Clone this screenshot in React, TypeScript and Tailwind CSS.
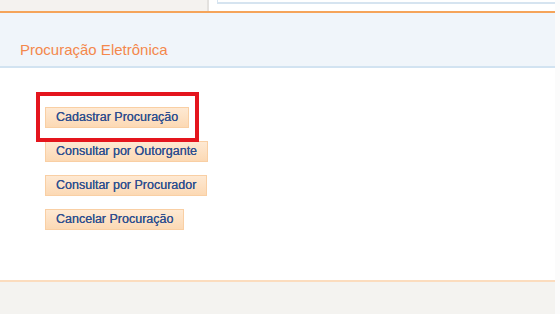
import React from 'react';

const actions = [
  'Cadastrar Procuração',
  'Consultar por Outorgante',
  'Consultar por Procurador',
  'Cancelar Procuração',
];

const ActionButton: React.FC<{ label: string }> = ({ label }) => (
  <button className="h-[21px] px-[10px] border border-[#f9cfa4] bg-gradient-to-b from-[#fee9d3] to-[#fcd9b4] text-[12.5px] leading-none text-[#2f4f8f] [text-shadow:0_0_0.4px_#2f4f8f]">
    {label}
  </button>
);

export default function App() {
  return (
    <div className="w-[560px] h-[314px] overflow-hidden bg-[#fbfbfb] font-['Liberation_Sans',Arial,sans-serif]">
      <div className="w-[555px] h-full flex flex-col bg-white">
        {/* top strip (rest of the previous section) */}
        <div className="flex h-[11px]">
          <div className="w-[209px] bg-[#f4f2ef] border-r-2 border-[#e3e1de]" />
          <div className="flex-1 bg-white pl-[8px]">
            <div className="h-[4px] border-b-2 border-[#d6e4f0] border-l border-l-[#d6e4f0]" />
          </div>
        </div>

        {/* section header */}
        <div className="h-[57px] flex items-end bg-[#f0f5fa] border-t-2 border-[#f5a45a] border-b-2 border-b-[#d2e3f1] pl-[20px] pb-[9px]">
          <h1 className="text-[15px] leading-none text-[#f4884c]">Procuração Eletrônica</h1>
        </div>

        {/* actions */}
        <div className="relative flex-1 flex flex-col items-start gap-[13px] pl-[45px] pt-[39px]">
          {actions.map((a) => (
            <ActionButton key={a} label={a} />
          ))}
          <div className="absolute left-[36px] top-[24px] w-[163px] h-[50px] border-4 border-[#e4151d]" />
        </div>

        {/* footer */}
        <div className="h-[34px] bg-[#f4f3f0] border-t-2 border-[#fbdcbe]" />
      </div>
    </div>
  );
}
